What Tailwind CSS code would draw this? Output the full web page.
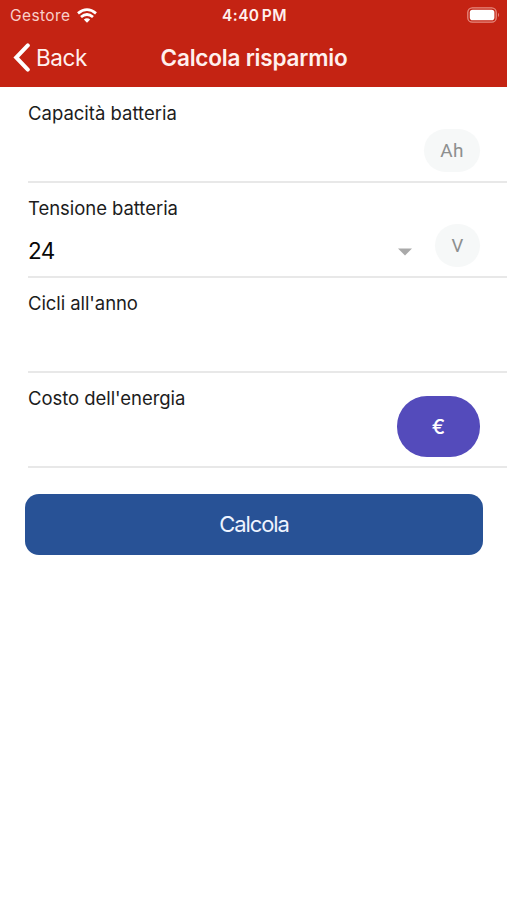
<!DOCTYPE html>
<html lang="it">
<head>
<meta charset="utf-8">
<title>Calcola risparmio</title>
<script src="https://cdn.jsdelivr.net/npm/@tailwindcss/browser@4"></script>
</head>
<body class="bg-white font-['Inter','Liberation_Sans',sans-serif] text-[#1c1c1c] overflow-hidden">
<main class="w-[507px] h-[900px] flex flex-col">
  <header class="h-[87px] bg-[#c42313] text-[#fff0ee] flex flex-col shrink-0">
    <div class="h-[29px] grid grid-cols-3 items-center pl-[10px] pr-[7px] whitespace-nowrap">
      <div class="flex items-center gap-[7px]">
        <span class="text-[15.5px] leading-[29px] tracking-[0.4px] text-[#f9d0ca] pt-px">Gestore</span>
        <svg class="w-5 h-[15px]" viewBox="0 0 20 15" fill="none" stroke="#fff" stroke-width="2.8"><path d="M1 5.4Q10-2.2 19 5.4"/><path d="M4 9Q10 4 16 9"/><path d="M10 14.7L6.8 11.6Q10 8.8 13.2 11.6Z" fill="#fff" stroke="none"/></svg>
      </div>
      <span class="-ml-px pt-px text-center text-[15.5px] leading-[29px] font-semibold tracking-[0.4px] [word-spacing:-2px]">4:40 PM</span>
      <svg class="justify-self-end w-[33px] h-4 -mt-px" viewBox="0 0 33 16"><rect x=".8" y=".8" width="28.4" height="14.4" rx="4.5" fill="none" stroke="#e68b80" stroke-width="1.3"/><rect x="2.8" y="2.8" width="24.6" height="10.4" rx="2.8" fill="#fff"/><path d="M31 5.8Q33 8 31 10.2Z" fill="#e68b80"/></svg>
    </div>
    <div class="h-[58px] grid grid-cols-[160px_1fr_159px] items-center whitespace-nowrap">
      <div class="flex items-center pl-[13px] gap-[6px]">
        <svg class="w-[17px] h-[29px] -mt-[2px]" viewBox="0 0 17 29" fill="none" stroke="#fff" stroke-width="4" stroke-linecap="round" stroke-linejoin="miter"><path d="M14.8 2.4L3.2 14.5L14.8 26.6"/></svg>
        <span class="text-[22.5px] leading-[30px] tracking-[-0.4px] -mt-px">Back</span>
      </div>
      <h1 class="text-center text-[22.5px] leading-[30px] font-semibold tracking-[-0.2px]">Calcola risparmio</h1>
    </div>
  </header>
  <form class="pl-7 flex flex-col">
    <div class="h-24 border-b-2 border-[#e8e8e8] flex justify-between">
      <label class="pt-[14px] text-[18.5px] leading-6">Capacità batteria</label>
      <span class="mt-[42px] mr-[27px] w-14 h-[43px] pt-[2px] rounded-[22px] bg-[#f6f8f8] text-[#8d8f8f] text-[19px] flex items-center justify-center font-['Roboto','Inter',sans-serif] tracking-[0.2px]">Ah</span>
    </div>
    <div class="h-[95px] border-b-2 border-[#e8e8e8] flex">
      <div class="flex-1 flex flex-col">
        <label class="pt-[13px] text-[18.5px] leading-6 tracking-[-0.05px]">Tensione batteria</label>
        <div class="mt-[17px] pr-[23px] flex items-center justify-between text-[22.5px] leading-7 text-[#080808]"><span class="tracking-[-0.5px]">24</span>
          <svg class="w-[14px] h-2 mt-[2px]" viewBox="0 0 14 8"><path d="M0 .5H14L7 7.5Z" fill="#a9a9a9"/></svg>
        </div>
      </div>
      <span class="mt-[41px] mr-[27px] w-[45px] h-[43px] pt-[2px] rounded-[22px] bg-[#f6f8f8] text-[#8d8f8f] text-[18.5px] flex items-center justify-center font-['Roboto','Inter',sans-serif]">V</span>
    </div>
    <div class="h-[95px] border-b-2 border-[#e8e8e8]">
      <label class="block pt-[13px] text-[18.5px] leading-6 tracking-[-0.08px]">Cicli all'anno</label>
    </div>
    <div class="h-[95px] border-b-2 border-[#e8e8e8] flex justify-between">
      <label class="pt-[13px] text-[18.5px] leading-6 tracking-[-0.05px]">Costo dell'energia</label>
      <span class="mt-[23px] mr-[27px] w-[83px] h-[61px] pt-px rounded-[30px] bg-[#544bbb] text-white text-[20px] font-medium flex items-center justify-center">€</span>
    </div>
    <button type="button" class="mt-[26px] -ml-[3px] w-[458px] h-[61px] rounded-[14px] bg-[#285296] text-[#eef4ff] text-[22px] tracking-[-1.1px]">Calcola</button>
  </form>
</main>
</body>
</html>
